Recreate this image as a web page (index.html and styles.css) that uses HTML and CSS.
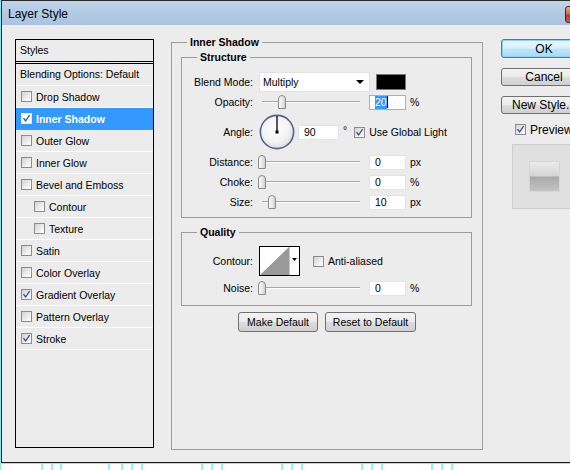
FILE: index.html
```html
<!DOCTYPE html>
<html>
<head>
<meta charset="utf-8">
<title>Layer Style</title>
<link rel="stylesheet" href="styles.css">
</head>
<body>
<div class="frame">
  <div class="window">
    <div class="titlebar">
      <span class="title">Layer Style</span>
      <span class="close"></span>
    </div>
    <div class="content">
      <div class="styles-panel">
        <div class="panel-head">Styles</div>
        <div class="panel-row">Blending Options: Default</div>
        <div class="item"><span class="cb"></span>Drop Shadow</div>
        <div class="item selected"><span class="cb"><svg viewBox="0 0 9 9"><path d="M1.5 4.2 L3.6 7 L7.6 1.2"/></svg></span>Inner Shadow</div>
        <div class="item"><span class="cb"></span>Outer Glow</div>
        <div class="item"><span class="cb"></span>Inner Glow</div>
        <div class="item"><span class="cb"></span>Bevel and Emboss</div>
        <div class="item sub"><span class="cb"></span>Contour</div>
        <div class="item sub"><span class="cb"></span>Texture</div>
        <div class="item"><span class="cb"></span>Satin</div>
        <div class="item"><span class="cb"></span>Color Overlay</div>
        <div class="item"><span class="cb"><svg viewBox="0 0 9 9"><path d="M1.5 4.2 L3.6 7 L7.6 1.2"/></svg></span>Gradient Overlay</div>
        <div class="item"><span class="cb"></span>Pattern Overlay</div>
        <div class="item"><span class="cb"><svg viewBox="0 0 9 9"><path d="M1.5 4.2 L3.6 7 L7.6 1.2"/></svg></span>Stroke</div>
      </div>

      <fieldset class="group outer">
        <legend>Inner Shadow</legend>
        <fieldset class="group inner structure">
          <legend>Structure</legend>
          <div class="row">
            <span class="lbl">Blend Mode:</span>
            <div class="select">Multiply<span class="arrow"></span></div>
            <span class="swatch"></span>
          </div>
          <div class="row">
            <span class="lbl">Opacity:</span>
            <div class="slider"><span class="track"></span><span class="thumb" style="left:20px"></span></div>
            <span class="field focus"><span class="sel">20</span><span class="caret"></span></span>
            <span class="unit">%</span>
          </div>
          <div class="row angle-row">
            <span class="lbl">Angle:</span>
            <svg class="dial" viewBox="0 0 36 36" width="36" height="36">
              <defs>
                <radialGradient id="dg" cx="0.45" cy="0.4" r="0.6">
                  <stop offset="0" stop-color="#ffffff"/>
                  <stop offset="0.7" stop-color="#f2f2f2"/>
                  <stop offset="1" stop-color="#dcdcdc"/>
                </radialGradient>
              </defs>
              <circle cx="18" cy="18" r="16.6" fill="url(#dg)" stroke="#53648f" stroke-width="1.6"/>
              <line x1="18" y1="18" x2="18" y2="2" stroke="#000" stroke-width="1.3"/>
              <rect x="16.5" y="16.5" width="3" height="3" fill="#000"/>
            </svg>
            <span class="field angle">90</span>
            <span class="deg">°</span>
            <span class="cb global"><svg viewBox="0 0 9 9"><path d="M1.5 4.2 L3.6 7 L7.6 1.2"/></svg></span>
            <span class="cb-text">Use Global Light</span>
          </div>
          <div class="row">
            <span class="lbl">Distance:</span>
            <div class="slider"><span class="track"></span><span class="thumb" style="left:0px"></span></div>
            <span class="field">0</span>
            <span class="unit">px</span>
          </div>
          <div class="row">
            <span class="lbl">Choke:</span>
            <div class="slider"><span class="track"></span><span class="thumb" style="left:0px"></span></div>
            <span class="field">0</span>
            <span class="unit">%</span>
          </div>
          <div class="row">
            <span class="lbl">Size:</span>
            <div class="slider"><span class="track"></span><span class="thumb" style="left:10px"></span></div>
            <span class="field">10</span>
            <span class="unit">px</span>
          </div>
        </fieldset>

        <fieldset class="group inner quality">
          <legend>Quality</legend>
          <div class="row contour-row">
            <span class="lbl">Contour:</span>
            <svg class="contour" viewBox="0 0 41 30" width="41" height="30">
              <rect x="0.5" y="0.5" width="40" height="29" fill="#fff" stroke="#000"/>
              <polygon points="1,29 30,1 30,29" fill="#999"/>
              <line x1="30.5" y1="1" x2="30.5" y2="29" stroke="#c8c8c8"/>
              <polygon points="33,12 38,12 35.5,15" fill="#000"/>
            </svg>
            <span class="cb anti"></span>
            <span class="cb-text">Anti-aliased</span>
          </div>
          <div class="row noise-row">
            <span class="lbl">Noise:</span>
            <div class="slider"><span class="track"></span><span class="thumb" style="left:0px"></span></div>
            <span class="field">0</span>
            <span class="unit">%</span>
          </div>
        </fieldset>

        <div class="defaults">
          <button class="btn make">Make Default</button>
          <button class="btn reset">Reset to Default</button>
        </div>
      </fieldset>

      <div class="side">
        <button class="btn side-btn ok">OK</button>
        <button class="btn side-btn">Cancel</button>
        <button class="btn side-btn">New Style...</button>
        <div class="preview-row">
          <span class="cb"><svg viewBox="0 0 9 9"><path d="M1.5 4.2 L3.6 7 L7.6 1.2"/></svg></span>
          <span class="cb-text">Preview</span>
        </div>
        <div class="preview-box"><span class="preview-swatch"></span></div>
      </div>
    </div>
  </div>
  <div class="ruler">
    <span class="tick" style="left:40px"></span>
    <span class="tick" style="left:50px"></span>
    <span class="tick" style="left:59px"></span>
    <span class="tick" style="left:107px"></span>
    <span class="tick" style="left:120px"></span>
    <span class="tick" style="left:130px"></span>
    <span class="tick" style="left:140px"></span>
    <span class="tick" style="left:200px"></span>
    <span class="tick" style="left:210px"></span>
    <span class="tick" style="left:220px"></span>
    <span class="tick" style="left:280px"></span>
    <span class="tick" style="left:290px"></span>
    <span class="tick" style="left:300px"></span>
    <span class="tick" style="left:360px"></span>
    <span class="tick" style="left:370px"></span>
    <span class="tick" style="left:380px"></span>
    <span class="tick" style="left:430px"></span>
    <span class="tick" style="left:440px"></span>
    <span class="tick" style="left:450px"></span>
  </div>
</div>
</body>
</html>
```

FILE: styles.css
```css
html, body {
  margin: 0;
  padding: 0;
}
body {
  width: 570px;
  height: 470px;
  overflow: hidden;
  background: #fff;
  font-family: "Liberation Sans", Arial, sans-serif;
  font-size: 10.5px;
  color: #000;
}
.frame {
  width: 570px;
  border-left: 1px solid #8fe3ec;
  box-sizing: border-box;
}
.window {
  height: 463px;
  box-sizing: border-box;
  border: 1px solid #2a2a2a;
  border-right: none;
  border-bottom-color: #1a1a1a;
  background: #ececec;
  display: flex;
  flex-direction: column;
  overflow: hidden;
}
.titlebar {
  height: 24px;
  flex: none;
  display: flex;
  align-items: center;
  justify-content: space-between;
  background: linear-gradient(#c0d4ea, #b0c8e3 60%, #a9c3e0);
  overflow: hidden;
}
.title {
  padding-left: 6px;
  font-size: 12px;
  padding-top: 2px;
}
.close {
  width: 43px;
  height: 17px;
  margin-right: -38px;
  margin-top: 2px;
  box-sizing: border-box;
  border: 1px solid #5a2018;
  border-radius: 3px;
  background: linear-gradient(#e9a898, #d06a58 45%, #b8382a 55%, #c85a48);
}
.content {
  flex: 1;
  display: flex;
  align-items: flex-start;
  padding: 10px 0 0 13px;
}

/* Styles list */
.styles-panel {
  flex: none;
  margin-top: 4px;
  width: 139px;
  height: 409px;
  box-sizing: border-box;
  border: 1px solid #000;
  background: #ececec;
}
.panel-head {
  height: 21px;
  line-height: 20px;
  padding-left: 4px;
  border-bottom: 3px double #000;
}
.panel-row {
  height: 21px;
  line-height: 21px;
  padding-left: 4px;
  border-bottom: 1px solid #fff;
}
.item {
  height: 21px;
  display: flex;
  align-items: center;
  padding-left: 5px;
  border-bottom: 1px solid #fff;
}
.item.sub {
  padding-left: 18px;
}
.item .cb {
  margin-right: 4px;
}
.item.selected {
  background: #3399ff;
  border-bottom-color: #3399ff;
  color: #fff;
  font-weight: bold;
}
.item.selected .cb {
  border-color: #e8e8e8;
  background: #fff;
}

/* checkboxes */
.cb {
  flex: none;
  width: 11px;
  height: 11px;
  box-sizing: border-box;
  border: 1px solid #8c8c8c;
  background: linear-gradient(135deg, #d2d2d2, #f4f4f4 70%, #fdfdfd);
  display: inline-flex;
  align-items: center;
  justify-content: center;
}
.cb svg {
  width: 9px;
  height: 9px;
}
.cb svg path {
  fill: none;
  stroke: #3a45a6;
  stroke-width: 1.3;
}
.cb-text {
  margin-left: 4px;
}

/* group boxes */
.group {
  margin: 0;
  padding: 0;
  min-width: 0;
  border: 1px solid #9d9d9d;
  box-sizing: border-box;
}
.group > legend {
  margin-left: 15px;
  padding: 0 3px;
  font-weight: bold;
  line-height: 14px;
  height: 14px;
}
.outer {
  flex: none;
  margin-left: 17px;
  width: 312px;
  height: 415px;
}
.inner {
  margin-left: 9px;
  width: 291px;
}
.structure {
  margin-top: 1px;
  padding: 8px 0 5px 0;
}
.quality {
  margin-top: 7px;
  padding: 7px 0 7px 0;
}
.row {
  height: 20px;
  display: flex;
  align-items: center;
}
.lbl {
  flex: none;
  width: 71px;
  text-align: right;
}
.angle-row {
  height: 40px;
}
.contour-row {
  height: 30px;
}
.noise-row {
  margin-top: 2px;
}

.select {
  margin-left: 6px;
  width: 111px;
  height: 20px;
  box-sizing: border-box;
  background: #fff;
  border: 1px solid #e2e2e2;
  display: flex;
  align-items: center;
  justify-content: space-between;
  padding: 0 5px 0 3px;
}
.arrow {
  width: 0;
  height: 0;
  border-left: 4px solid transparent;
  border-right: 4px solid transparent;
  border-top: 4px solid #000;
}
.swatch {
  margin-left: 6px;
  width: 30px;
  height: 16px;
  box-sizing: border-box;
  background: #000;
  border: 1px solid #777;
}

.slider {
  position: relative;
  margin-left: 5px;
  width: 106px;
  height: 20px;
  flex: none;
}
.track {
  position: absolute;
  left: 4px;
  right: 4px;
  top: 9px;
  height: 1px;
  background: #a8a8a8;
  box-shadow: 0 1px 0 #fdfdfd;
}
.thumb {
  position: absolute;
  top: 3px;
  width: 8px;
  height: 14px;
  box-sizing: border-box;
  border: 1px solid #8a8a8a;
  border-radius: 4px 4px 1px 1px;
  background: linear-gradient(90deg, #fafafa, #e6e6e6 60%, #cfcfcf);
}

.field {
  flex: none;
  margin-left: 5px;
  width: 37px;
  height: 15px;
  box-sizing: border-box;
  background: #fff;
  border: 1px solid #e4e4e4;
  padding-left: 5px;
  line-height: 13px;
  display: flex;
  align-items: center;
}
.field.focus {
  border-color: #86b7e6;
}
.sel {
  background: #3399ff;
  color: #fff;
  line-height: 13px;
}
.caret {
  width: 1px;
  height: 12px;
  background: #000;
}
.unit {
  margin-left: 4px;
}

.dial {
  margin-left: 6px;
  flex: none;
}
.field.angle {
  margin-left: 3px;
  width: 41px;
}
.deg {
  margin-left: 4px;
  align-self: flex-start;
  margin-top: 12px;
}
.cb.global {
  margin-left: 7px;
}

.contour {
  margin-left: 6px;
  flex: none;
}
.cb.anti {
  margin-left: 13px;
}

.defaults {
  display: flex;
  justify-content: center;
  gap: 7px;
  margin-top: 6px;
}

.btn {
  font-family: inherit;
  font-size: 10.5px;
  color: #000;
  height: 20px;
  padding: 0;
  box-sizing: border-box;
  border: 1px solid #707070;
  border-radius: 3px;
  background: linear-gradient(#f3f3f3, #ebebeb 48%, #dddddd 52%, #cfcfcf);
}
.btn.make {
  width: 80px;
}
.btn.reset {
  width: 91px;
}

.side {
  flex: none;
  margin-left: 18px;
  margin-top: 4px;
  width: 86px;
  display: flex;
  flex-direction: column;
}
.side-btn {
  width: 86px;
  height: 18px;
  font-size: 12px;
  margin-bottom: 10px;
}
.side-btn.ok {
  height: 19px;
  border-color: #3c7fb1;
  background: linear-gradient(#eaf6fd, #d9f0fc 48%, #bee6fd 52%, #a7d9f5);
  box-shadow: inset 0 0 0 1px #8ed3f5;
}
.preview-row {
  display: flex;
  align-items: center;
  margin-left: 14px;
  height: 11px;
  font-size: 12px;
}
.preview-box {
  margin-top: 9px;
  margin-left: 11px;
  width: 64px;
  height: 65px;
  box-sizing: border-box;
  border: 1px solid #cdcdcd;
  background: #e0e0e0;
  display: flex;
  align-items: center;
  justify-content: center;
}
.preview-swatch {
  width: 31px;
  height: 31px;
  box-sizing: border-box;
  border: 1px solid #d6d6d6;
  background: linear-gradient(#ececec, #d4d4d4 48%, #a9a9a9 52%, #c4c4c4);
}

/* bottom strip */
.ruler {
  position: relative;
  height: 7px;
  border-top: 1px solid #84eef2;
  background: #fff;
}
.tick {
  position: absolute;
  top: 0;
  width: 2px;
  height: 7px;
  background: #8ef6f8;
}
```
